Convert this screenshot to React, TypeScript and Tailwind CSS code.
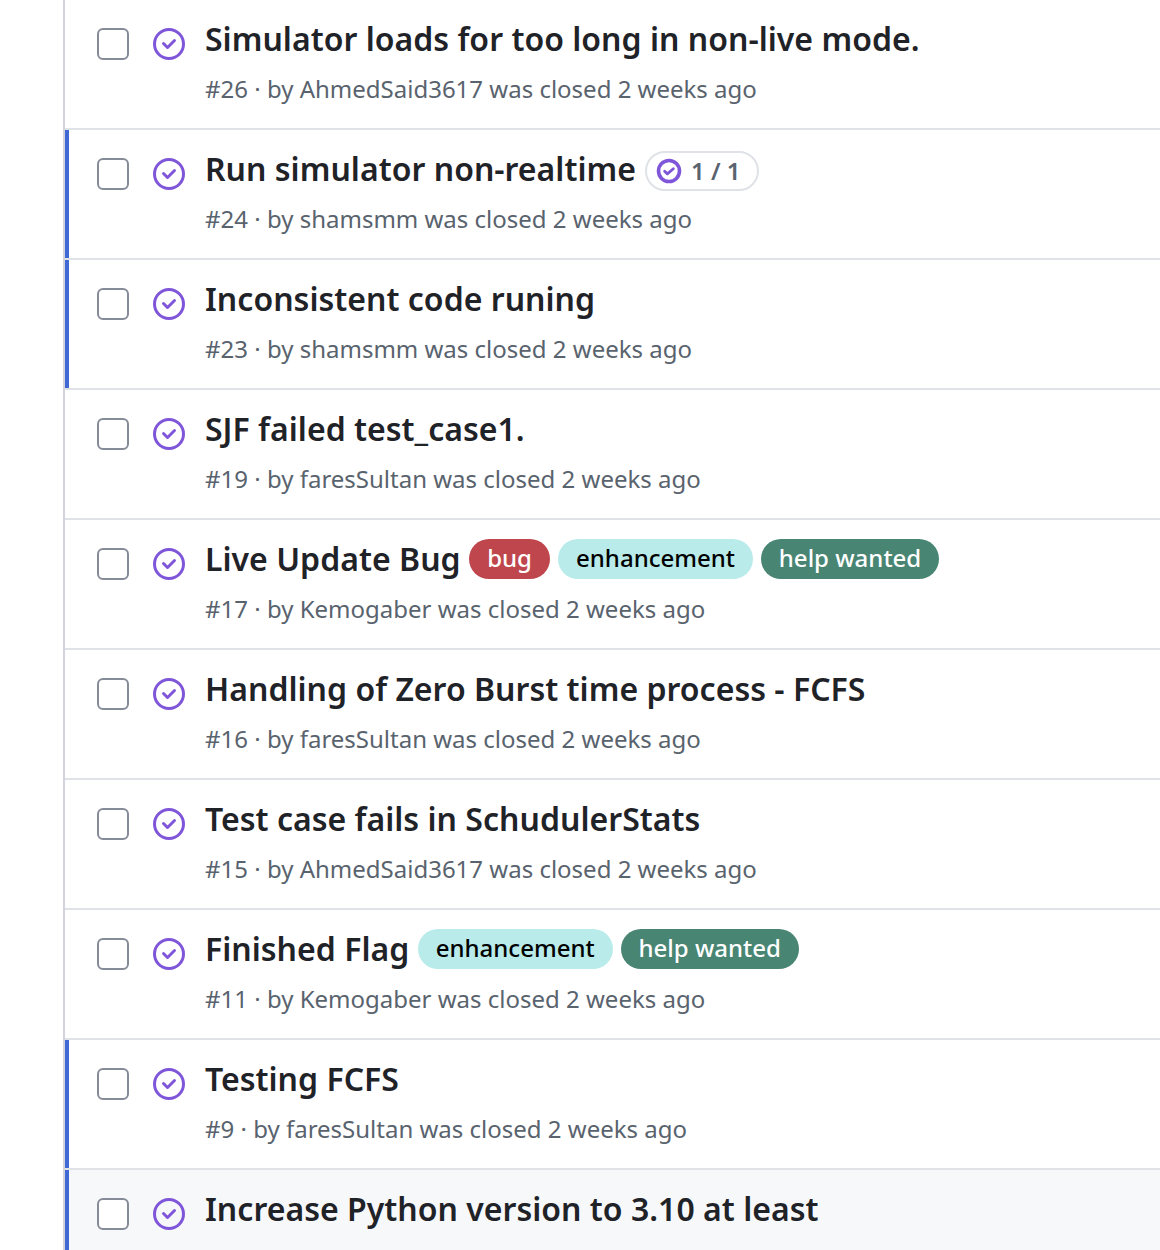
import React from 'react';

type Issue = { id: number; title: string; author: string; unread?: boolean; labels?: string[]; tasks?: string; active?: boolean };

const issues: Issue[] = [
  { id: 26, title: 'Simulator loads for too long in non-live mode.', author: 'AhmedSaid3617' },
  { id: 24, title: 'Run simulator non-realtime', author: 'shamsmm', unread: true, tasks: '1 / 1' },
  { id: 23, title: 'Inconsistent code runing', author: 'shamsmm', unread: true },
  { id: 19, title: 'SJF failed test_case1.', author: 'faresSultan' },
  { id: 17, title: 'Live Update Bug', author: 'Kemogaber', labels: ['bug', 'enhancement', 'help wanted'] },
  { id: 16, title: 'Handling of Zero Burst time process - FCFS', author: 'faresSultan' },
  { id: 15, title: 'Test case fails in SchudulerStats', author: 'AhmedSaid3617' },
  { id: 11, title: 'Finished Flag', author: 'Kemogaber', labels: ['enhancement', 'help wanted'] },
  { id: 9, title: 'Testing FCFS', author: 'faresSultan', unread: true },
  { id: 8, title: 'Increase Python version to 3.10 at least', author: 'shamsmm', unread: true, active: true },
];

const labelStyles: Record<string, string> = {
  bug: 'bg-[#bf464d] text-white w-[81px]',
  enhancement: 'bg-[#b9ebea] text-black w-[195px]',
  'help wanted': 'bg-[#488573] text-white w-[178px]',
};

function ClosedIcon() {
  return (
    <svg viewBox="0 0 16 16" className="h-8 w-8 shrink-0" fill="#7f56d9">
      <path d="M11.28 6.78a.75.75 0 0 0-1.06-1.06L7.25 8.69 5.78 7.22a.75.75 0 0 0-1.06 1.06l2 2a.75.75 0 0 0 1.06 0l3.5-3.5Z" />
      <path d="M16 8A8 8 0 1 1 0 8a8 8 0 0 1 16 0Zm-1.5 0a6.5 6.5 0 1 0-13 0 6.5 6.5 0 0 0 13 0Z" />
    </svg>
  );
}

function Row({ issue }: { issue: Issue }) {
  return (
    <li className={`flex h-[130px] border-b-2 border-[#dfe2e6] ${issue.active ? 'bg-[#f6f8fa]' : 'bg-white'}`}>
      <div className={`w-1 shrink-0 ${issue.unread ? 'bg-[#4069d5]' : ''}`} />
      <div className="ml-7 mt-7 h-8 w-8 shrink-0 rounded-[6px] border-2 border-[#868b98] bg-white" />
      <div className="ml-6 mt-7"><ClosedIcon /></div>
      <div className="ml-5 whitespace-nowrap">
        <div className="mt-4 flex h-[46px] items-center">
          <h3 className="text-[32px] font-semibold leading-[46px] tracking-[0.02px] text-[#1f2328]">{issue.title}</h3>
          {issue.tasks && (
            <span className="ml-[9px] mt-1 flex h-10 w-[114px] items-center rounded-full border-2 border-[#dfe2e6] pl-[10px] text-[24px] font-semibold text-[#59636e]">
              <svg viewBox="0 0 16 16" className="mr-[10px] h-6 w-6 overflow-visible" fill="none" stroke="#7f56d9" strokeWidth="2.4">
                <circle cx="8" cy="8" r="7" />
                <path d="m5.1 8.2 1.8 1.7 4-3.4" strokeWidth="1.9" strokeLinecap="round" strokeLinejoin="round" />
              </svg>
              {issue.tasks}
            </span>
          )}
          {issue.labels && (
            <span className="ml-[8.4px] flex gap-2">
              {issue.labels.map((l) => (
                <span key={l} className={`flex h-10 items-center justify-center rounded-full pb-[2px] text-[24px] font-medium ${labelStyles[l]}`}>{l}</span>
              ))}
            </span>
          )}
        </div>
        <p className="mt-[9px] text-[24px] leading-9 text-[#59636e]">#{issue.id} · by {issue.author} was closed 2 weeks ago</p>
      </div>
    </li>
  );
}

export default function App() {
  return (
    <main className="h-[1250px] overflow-hidden bg-white pl-[63px] font-['Noto_Sans',sans-serif]">
      <ul className="border-l-2 border-[#d1d5db]">
        {issues.map((issue) => <Row key={issue.id} issue={issue} />)}
      </ul>
    </main>
  );
}
